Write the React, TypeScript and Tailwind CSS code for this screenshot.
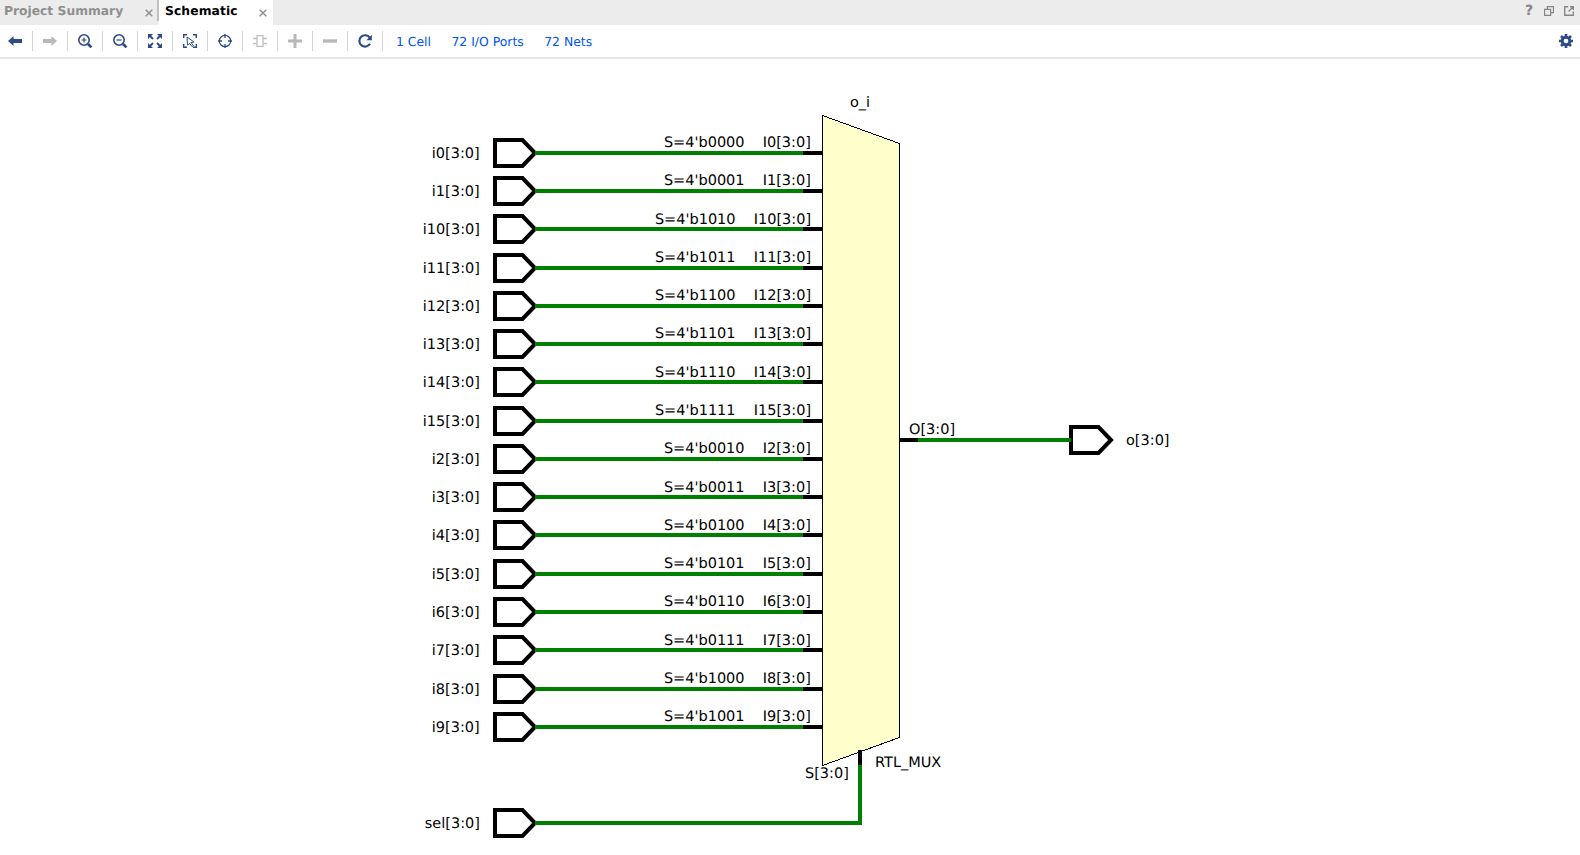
import type { ReactNode } from 'react';

const NAVY = '#2d4b84';
const GRAY = '#b8b8b8';

const inputs = [
  ['0', '0000'], ['1', '0001'], ['10', '1010'], ['11', '1011'],
  ['12', '1100'], ['13', '1101'], ['14', '1110'], ['15', '1111'],
  ['2', '0010'], ['3', '0011'], ['4', '0100'], ['5', '0101'],
  ['6', '0110'], ['7', '0111'], ['8', '1000'], ['9', '1001'],
];

function Icon({ children, size = 16 }: { children: ReactNode; size?: number }) {
  return (
    <svg width={size} height={size} viewBox="0 0 16 16" fill="none" className="block shrink-0">
      {children}
    </svg>
  );
}

const tools: ReactNode[] = [
  <path d="M1 8 6.500 3v3H15v4H6.500v3z" fill={NAVY} />,
  <path d="M15 8 9.500 3v3H1v4h8.500v3z" fill={GRAY} />,
  <g stroke={NAVY}>
    <circle cx="7" cy="7" r="5.2" strokeWidth="1.6" />
    <path d="M4.500 7h5M7 4.500v5" strokeWidth="1.2" />
    <path d="m11 11 3.400 3.400" strokeWidth="2.600" />
  </g>,
  <g stroke={NAVY}>
    <circle cx="7" cy="7" r="5.2" strokeWidth="1.6" />
    <path d="M4.500 7h5" strokeWidth="1.2" />
    <path d="m11 11 3.400 3.400" strokeWidth="2.600" />
  </g>,
  <g>
    <path d="M1 1h5L1 6zM15 1v5l-5-5zM1 15v-5l5 5zM15 15h-5l5-5z" fill={NAVY} />
    <path d="m2 2 4 4m8-4-4 4m-8 8 4-4m8 4-4-4" stroke={NAVY} strokeWidth="1.8" />
  </g>,
  <g stroke={NAVY}>
    <path d="M1.700 5V1.700H5M11 1.700h3.300V5M1.700 11v3.300H5M11 14.300h3.300V11" strokeWidth="1.4" />
    <path d="m5 4 7 5-3 .500 2.500 3-1.500 1-2.300-3L5.500 12z" strokeWidth="1" />
  </g>,
  <g stroke={NAVY}>
    <circle cx="8" cy="8" r="5.700" strokeWidth="1.2" />
    <path d="M8 1v4M8 11v4M1 8h4M11 8h4" strokeWidth="1.3" />
  </g>,
  <g stroke="#c0c0c0" strokeWidth="1.3">
    <path d="M5 2.700h6v10.600H5zM1 5.500h4M1 10.500h4M11 5.500h4M11 10.500h4" />
  </g>,
  <path d="M8 1v14M1 8h14" stroke={GRAY} strokeWidth="3" />,
  <path d="M1 8h14" stroke={GRAY} strokeWidth="3.400" />,
  <g>
    <path d="M12.700 4.600A5.700 5.700 0 1 0 13 10.800" stroke={NAVY} strokeWidth="2.200" />
    <path d="M14.800 1.800v5.400H9.400z" fill={NAVY} />
  </g>,
];

function CloseIcon() {
  return (
    <svg width="8" height="8" viewBox="0 0 8 8" className="block shrink-0">
      <path d="m.7.700 6.600 6.600M7.300.700.700 7.300" stroke="#909090" strokeWidth="1.500" />
    </svg>
  );
}

function Port({ x, y }: { x: number; y: number }) {
  return (
    <path
      d={`M${x} ${y - 13}h27.500l12.500 13-12.500 13h-27.500z`}
      fill="#fff"
      stroke="#000"
      strokeWidth="4"
    />
  );
}

function Schematic() {
  return (
    <svg width="1580" height="796" viewBox="0 59 1580 796" className="block font-['DejaVu_Sans',sans-serif] text-[14.5px] [text-rendering:geometricPrecision]">
      <path d="M822.500 115.500 899.500 143.500V737.500L822.500 765.500z" fill="#ffffcc" stroke="#000" shapeRendering="crispEdges" />
      {inputs.map(([n, code], i) => {
        const y = Math.round(152.870 + i * 38.260);
        const ty = Math.round(147.100 + i * 38.270);
        const wide = n.length > 1 ? 9 : 0;
        return (
          <g key={n}>
            <Port x={495} y={y} />
            <path d={`M535 ${y}H803`} stroke="#008000" strokeWidth="4" />
            <path d={`M803 ${y}H822`} stroke="#000" strokeWidth="4" />
            <text x={431.800 - wide} y={y + 5}>{`i${n}[3:0]`}</text>
            <text x={663.900 - wide} y={ty}>{`S=4'b${code}`}</text>
            <text x={762.700 - wide} y={ty}>{`I${n}[3:0]`}</text>
          </g>
        );
      })}
      <Port x={495} y={823} />
      <text x="424.800" y="828">sel[3:0]</text>
      <path d="M535 823H860V765" stroke="#008000" strokeWidth="4" fill="none" />
      <path d="M860 750V765" stroke="#000" strokeWidth="4" />
      <text x="805" y="778">S[3:0]</text>
      <text x="875" y="767">RTL_MUX</text>
      <text x="850" y="107">o_i</text>
      <path d="M900 440H918" stroke="#000" strokeWidth="4" />
      <Port x={1071} y={440} />
      <path d="M918 440H1071" stroke="#008000" strokeWidth="4" />
      <text x="909" y="434">O[3:0]</text>
      <text x="1126" y="445">o[3:0]</text>
    </svg>
  );
}

export default function App() {
  return (
    <div className="flex h-[855px] w-[1580px] flex-col overflow-hidden bg-white font-['DejaVu_Sans',sans-serif] [text-rendering:geometricPrecision]">
      <div className="flex h-[25px] shrink-0 items-stretch bg-[#ececec] text-[12.3px] font-bold leading-[23px]">
        <div className="flex h-[21px] w-[159px] justify-between border-r-2 border-[#c0c0c0] pr-1 pl-1 text-[#8f8f8f]">
          <span className="whitespace-nowrap">Project Summary</span>
          <span className="flex h-[25px] items-center"><CloseIcon /></span>
        </div>
        <div className="flex w-[114px] justify-between bg-white pr-1.5 pl-1.5 text-black">
          <span className="tracking-[0.1px]">Schematic</span>
          <span className="flex items-center"><CloseIcon /></span>
        </div>
        <div className="ml-auto flex items-center gap-[10px] pr-1.5 pb-[3px] text-[#858585]">
          <span className="pt-px pr-px text-[14px]">?</span>
          <svg width="10" height="10" viewBox="0 0 11 11" fill="none" stroke="#858585" strokeWidth="1.300">
            <path d="M3.700 3.500V.600h6.700v6.700H7.300M.600 3.700h6.700v6.700H.600z" />
          </svg>
          <svg width="10" height="10" viewBox="0 0 11 11" fill="none" stroke="#858585" strokeWidth="1.500">
            <path d="M4.500.800H.800v9.400h9.400V6M5 6l4.500-4.500M6.500.800h3.700v3.700" />
          </svg>
        </div>
      </div>
      <div className="flex h-[34px] shrink-0 items-center border-b-2 border-[#e6e6e6] text-[12.4px] text-[#0055f0]">
        {tools.map((icon, i) => (
          <div key={i} className={`flex h-5 items-center justify-center border-r border-[#d4d4d4] ${i === 0 ? 'w-[33px] pr-0.5' : 'w-[35px]'}`}>
            <Icon>{icon}</Icon>
          </div>
        ))}
        <div className="flex gap-[20.5px] pt-0.5 pl-[13px] leading-4">
          <span>1 Cell</span>
          <span>72 I/O Ports</span>
          <span>72 Nets</span>
        </div>
        <div className="ml-auto pr-[7px]">
          <Icon size={14}>
            <circle cx="8" cy="8" r="4.400" stroke={NAVY} strokeWidth="3.400" />
            <path d="M8 0v3M8 13v3M0 8h3M13 8h3M2.300 2.300l2.200 2.200M11.500 11.500l2.200 2.200M13.700 2.300l-2.200 2.200M2.300 13.700l2.200-2.200" stroke={NAVY} strokeWidth="3" />
          </Icon>
        </div>
      </div>
      <Schematic />
    </div>
  );
}
